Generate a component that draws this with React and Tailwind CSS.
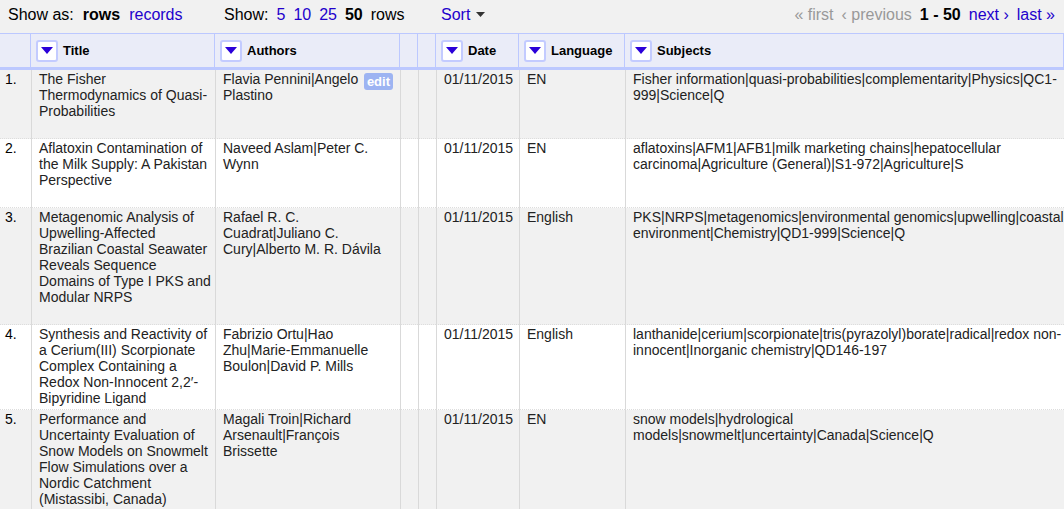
import React from "react";
import clsx from "clsx";

const columns = [
  { id: "title", label: "Title", pad: "pr-px" },
  { id: "authors", label: "Authors", pad: "pr-[5px]" },
  { id: "hiddenA", label: "", pad: "pr-px" },
  { id: "hiddenB", label: "", pad: "pr-px" },
  { id: "date", label: "Date", pad: "pr-[5px]" },
  { id: "language", label: "Language", pad: "pr-[5px]" },
  { id: "subjects", label: "Subjects", pad: "pr-px" },
];

const rows = [
  {
    title: "The Fisher Thermodynamics of Quasi-Probabilities",
    authors: "Flavia Pennini|Angelo Plastino",
    date: "01/11/2015",
    language: "EN",
    subjects:
      "Fisher information|quasi-probabilities|complementarity|Physics|QC1-999|Science|Q",
    height: "h-[69px]",
    editing: true,
  },
  {
    title: "Aflatoxin Contamination of the Milk Supply: A Pakistan Perspective",
    authors: "Naveed Aslam|Peter C. Wynn",
    date: "01/11/2015",
    language: "EN",
    subjects:
      "aflatoxins|AFM1|AFB1|milk marketing chains|hepatocellular carcinoma|Agriculture (General)|S1-972|Agriculture|S",
    height: "h-[69px]",
  },
  {
    title:
      "Metagenomic Analysis of Upwelling-Affected\nBrazilian Coastal Seawater Reveals Sequence Domains of Type I PKS and Modular NRPS",
    authors: "Rafael R. C. Cuadrat|Juliano C. Cury|Alberto M. R. Dávila",
    date: "01/11/2015",
    language: "English",
    subjects:
      "PKS|NRPS|metagenomics|environmental\u00a0genomics|upwelling|coastal environment|Chemistry|QD1-999|Science|Q",
    height: "h-[117px]",
  },
  {
    title:
      "Synthesis and Reactivity of a Cerium(III) Scorpionate Complex Containing a Redox Non-Innocent 2,2′-Bipyridine Ligand",
    authors: "Fabrizio Ortu|Hao Zhu|Marie-Emmanuelle Boulon|David P. Mills",
    date: "01/11/2015",
    language: "English",
    subjects:
      "lanthanide|cerium|scorpionate|tris(pyrazolyl)borate|radical|redox non-innocent|Inorganic chemistry|QD146-197",
    height: "h-[85px]",
  },
  {
    title:
      "Performance and Uncertainty Evaluation of Snow Models on Snowmelt Flow Simulations over a Nordic Catchment (Mistassibi, Canada)",
    authors: "Magali Troin|Richard Arsenault|François Brissette",
    date: "01/11/2015",
    language: "EN",
    subjects:
      "snow models|hydrological models|snowmelt|uncertainty|Canada|Science|Q",
    height: "h-[85px]",
  },
];

const link = "text-[#2200cc] no-underline";

function Toolbar() {
  return (
    <nav className="flex h-[33px] items-center pt-px pr-[9px] pb-1 pl-2 text-base whitespace-nowrap">
      <div className="flex w-[216px] gap-[9px]">
        <span>Show as:</span>
        <b>rows</b>
        <a href="#records" className={link}>records</a>
      </div>
      <div className="flex w-[217px] gap-2">
        <span>Show:</span>
        <a href="#5" className={link}>5</a>
        <a href="#10" className={link}>10</a>
        <a href="#25" className={link}>25</a>
        <b>50</b>
        <span>rows</span>
      </div>
      <button type="button" className="flex items-center gap-[6px] text-[#2200cc]">
        Sort
        <svg width="9" height="7" viewBox="0 0 9 7" aria-hidden="true">
          <path d="M0 0h9L4.5 5z" fill="#333" />
        </svg>
      </button>
      <div className="ml-auto flex gap-2">
        <span className="text-[#999]">« first</span>
        <span className="text-[#999]">‹ previous</span>
        <b>1 - 50</b>
        <a href="#next" className={link}>next ›</a>
        <a href="#last" className={link}>last »</a>
      </div>
    </nav>
  );
}

function ColumnHeader({ label }) {
  return (
    <div className="flex items-center gap-[5px] pl-[5px]">
      <button
        type="button"
        aria-label={`${label} column menu`}
        className="flex size-[22px] items-center justify-center rounded-[3px] border-2 border-[#c3cbff] bg-white"
      >
        <svg width="12" height="7" viewBox="0 0 12 7" aria-hidden="true">
          <path d="M0 0h12L6 7z" fill="#2b00d9" />
        </svg>
      </button>
      <span>{label}</span>
    </div>
  );
}

export default function App() {
  const cell =
    "border-b border-b-[#ddd] [border-bottom-style:dotted] border-l border-l-[#d9d9d9] pt-px pb-[3px] pl-[7px] align-top whitespace-pre-line";
  return (
    <main className="h-screen overflow-hidden bg-[#f1f1f1] font-['Liberation_Sans',Arial,sans-serif] text-black">
      <Toolbar />
      <table className="w-full table-fixed border-separate border-spacing-0 text-sm leading-4">
        <colgroup>
          <col className="w-[31px]" />
          <col className="w-[184px]" />
          <col className="w-[185px]" />
          <col className="w-[18px]" />
          <col className="w-[18px]" />
          <col className="w-[83px]" />
          <col className="w-[106px]" />
          <col />
        </colgroup>
        <thead>
          <tr className="h-[37px] bg-[#eaecf8] text-left text-[13px]">
            <th className="border-t border-r border-b-3 border-[#bcc8ff] p-0" />
            {columns.map((c) => (
              <th key={c.id} className="border-t border-r border-b-3 border-[#bcc8ff] p-0">
                {c.label && <ColumnHeader label={c.label} />}
              </th>
            ))}
          </tr>
        </thead>
        <tbody className="text-[#222]">
          {rows.map((row, i) => (
            <tr key={row.title} className={clsx(row.height, i % 2 ? "bg-white" : "bg-[#f1f1f1]")}>
              <td className="border-b border-dotted border-[#ddd] pt-px pl-[5px] align-top text-black">
                {i + 1}.
              </td>
              {columns.map((c) => (
                <td key={c.id} className={clsx(cell, c.pad)}>
                  {c.id === "authors" && row.editing ? (
                    <div className="relative">
                      {row.authors}
                      <button
                        type="button"
                        className="absolute top-[2px] right-[2px] h-[17px] rounded-[3px] bg-[#9db4f2] px-[3px] text-[13px] leading-4 font-bold text-white"
                      >
                        edit
                      </button>
                    </div>
                  ) : (
                    row[c.id]
                  )}
                </td>
              ))}
            </tr>
          ))}
        </tbody>
      </table>
    </main>
  );
}
